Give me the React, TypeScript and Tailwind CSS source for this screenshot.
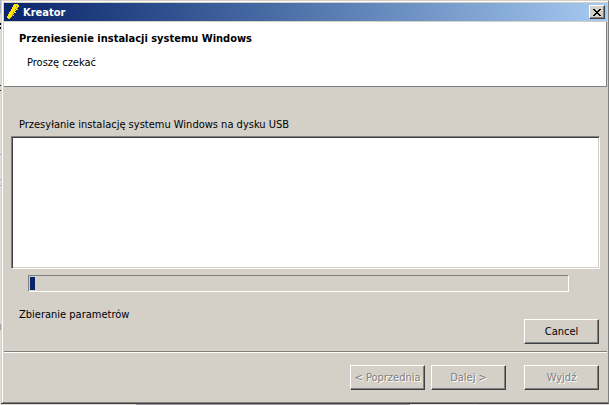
import React, { useState } from 'react';

const raised =
  'border border-t-white border-l-white border-r-[#404040] border-b-[#404040] shadow-[inset_-1px_-1px_0_#808080] bg-[#d4d0c8]';

type WizardButtonProps = {
  label: string;
  disabled?: boolean;
  onClick?: () => void;
};

function WizardButton({ label, disabled, onClick }: WizardButtonProps) {
  return (
    <button
      type="button"
      disabled={disabled}
      onClick={onClick}
      className={`h-[25px] w-[75px] whitespace-nowrap ${raised} disabled:text-[#808080] disabled:[text-shadow:1px_1px_0_#fff]`}
    >
      {label}
    </button>
  );
}

function AppIcon() {
  return (
    <svg className="h-4 w-4" viewBox="0 0 16 16" shapeRendering="crispEdges" aria-hidden="true">
      <path
        fill="#ffe600"
        d="M10 0h2v1h1v2h-1v1h-1v1h1v1h-2v1h-1v1h1v1h-2v1h-1v1h1v1h-2v1h-1v1h-1v1h-2v-1h-1v-2h1v-2h1v-2h1v-1h1v-2h1v-2h1v-2h1v-1h1z"
      />
      <path fill="#8c7a10" d="M10 2h1v1h-1zM9 5h1v1h-1zM7 8h1v1h-1zM6 11h1v1h-1z" />
    </svg>
  );
}

// Sliver of the desktop visible on the left of the window
function LeftEdge() {
  return (
    <div className="flex w-px shrink-0 flex-col bg-[#e0ddd5]" aria-hidden="true">
      <div className="h-[14px] bg-[#b0b4bc]" />
      <div className="mt-[9px] h-[2px] bg-black" />
      <div className="mt-[2px] h-[2px] bg-black" />
      <div className="mt-14 h-px bg-[#303030]" />
      <div className="mt-1 h-px bg-[#303030]" />
      <div className="mt-[63px] h-px bg-[#a8a4a0]" />
      <div className="mt-6 h-px bg-[#a8a4a0]" />
      <div className="mt-[5px] h-px bg-[#a8a4a0]" />
      <div className="mt-[138px] h-[6px] bg-[#a8a4a0]" />
    </div>
  );
}

function BottomEdge() {
  return (
    <div className="flex h-px shrink-0 bg-[#dedbd3]" aria-hidden="true">
      <div className="ml-[136px] w-[274px] bg-[#a09c9c]" />
      <div className="w-[68px] bg-[#e8e4dc]" />
    </div>
  );
}

export default function App() {
  const [progress] = useState(1);

  return (
    <div className="flex min-h-screen flex-col bg-[#d4d0c8] font-['DejaVu_Sans_Condensed','DejaVu_Sans',sans-serif] text-[11px] leading-[14px] text-black">
      <div className="flex grow">
        <LeftEdge />
        <div className="flex grow flex-col border-t border-r border-b border-t-[#d4d0c8] border-r-[#808080] border-b-[#404040] pl-px">
          <div className="flex grow flex-col border-t border-b border-l border-t-white border-b-[#808080] border-l-white pt-px pr-px pl-px">
            <header className="flex h-[18px] items-center bg-linear-to-r from-[#0a246a] to-[#a6caf0] px-[2px]">
              <AppIcon />
              <h1 className="grow pt-[2px] pl-px font-bold text-white">Kreator</h1>
              <button
                type="button"
                aria-label="Zamknij"
                className={`flex h-[14px] w-4 items-center justify-center ${raised}`}
              >
                <svg className="h-[7px] w-2" viewBox="0 0 8 7" shapeRendering="crispEdges">
                  <path
                    fill="#000"
                    d="M0 0h2v1h-2zM6 0h2v1h-2zM1 1h2v1h-2zM5 1h2v1h-2zM2 2h4v1h-4zM3 3h2v1h-2zM2 4h4v1h-4zM1 5h2v1h-2zM5 5h2v1h-2zM0 6h2v1h-2zM6 6h2v1h-2z"
                  />
                </svg>
              </button>
            </header>

            <section className="mt-px h-[65px] border-r border-b border-[#808080] bg-white px-[15px] pt-[10px]">
              <h2 className="font-bold">Przeniesienie instalacji systemu Windows</h2>
              <p className="mt-[10px] pl-2">Proszę czekać</p>
            </section>

            <main className="flex grow flex-col px-[7px] pt-[31px]">
              <label htmlFor="log" className="pl-2">
                Przesyłanie instalację systemu Windows na dysku USB
              </label>
              <textarea
                id="log"
                readOnly
                className="mt-1 block h-[133px] w-full resize-none border border-t-[#808080] border-r-white border-b-white border-l-[#808080] bg-white shadow-[inset_1px_1px_0_#404040,inset_-1px_-1px_0_#d4d0c8] outline-none"
              />
              <div
                role="progressbar"
                aria-valuenow={progress}
                aria-label="Zbieranie parametrów"
                className="mt-[6px] mr-[31px] ml-[17px] h-[17px] border border-t-[#808080] border-r-white border-b-white border-l-[#808080] p-px"
              >
                <div className="h-full bg-[#0a246a]" style={{ width: `${progress}%` }} />
              </div>
              <div className="flex grow items-start justify-between pr-px pb-[7px] pl-2">
                <p className="pt-4">Zbieranie parametrów</p>
                <div className="self-end pt-[27px]">
                  <WizardButton label="Cancel" />
                </div>
              </div>
            </main>

            <footer className="flex justify-end border-t border-[#808080] pt-[13px] pr-2 pb-3 shadow-[inset_0_1px_0_#fff]">
              <div className="flex gap-[6px]">
                <WizardButton label="< Poprzednia" disabled />
                <WizardButton label="Dalej >" disabled />
              </div>
              <div className="ml-[18px]">
                <WizardButton label="Wyjdź" disabled />
              </div>
            </footer>
          </div>
        </div>
      </div>
      <BottomEdge />
    </div>
  );
}
